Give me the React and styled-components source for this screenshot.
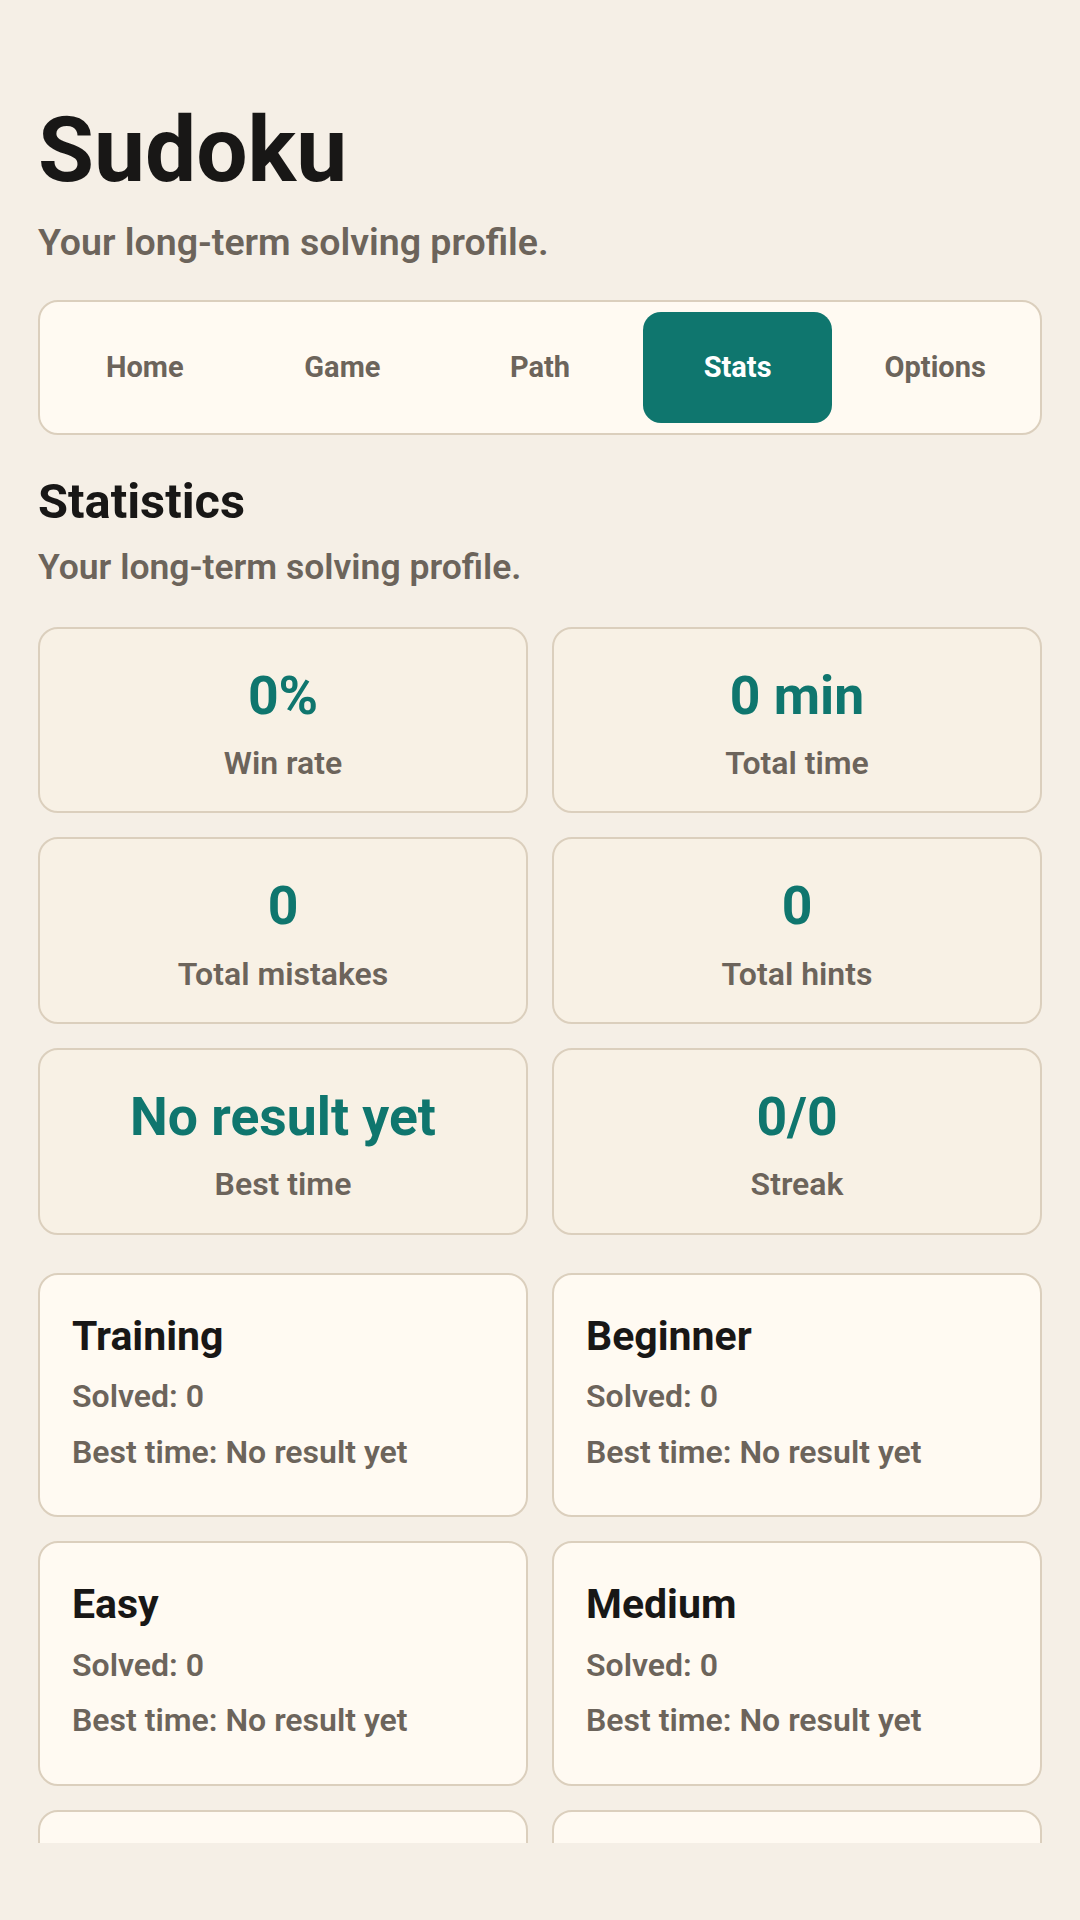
import React from "react";
import styled, { createGlobalStyle } from "styled-components";

const GlobalStyle = createGlobalStyle`
  * {
    box-sizing: border-box;
  }
  body {
    margin: 0;
    background: #f5efe6;
    font-family: Roboto, "Liberation Sans", Arial, sans-serif;
    color: #181716;
  }
`;

const Shell = styled.div`
  height: 100vh;
  display: flex;
  flex-direction: column;
  padding: 100px 38px 77px;
`;

const Title = styled.h1`
  margin: 0;
  font-size: 91px;
  line-height: 1.1;
  font-weight: 700;
  color: #181716;
`;

const Lead = styled.p`
  margin: 16px 0 0;
  font-size: 37.5px;
  line-height: 1.4;
  font-weight: 600;
  color: #6c645b;
`;

const TabBar = styled.nav`
  margin-top: 31px;
  display: grid;
  grid-template-columns: repeat(5, 1fr);
  gap: 8px;
  padding: 10px;
  background: #fffaf2;
  border: 2px solid #dbcfbd;
  border-radius: 20px;
`;

const Tab = styled.button`
  height: 111px;
  border: none;
  border-radius: 18px;
  font-family: inherit;
  font-size: 29px;
  font-weight: 700;
  background: ${(p) => (p.$active ? "#0f766e" : "transparent")};
  color: ${(p) => (p.$active ? "#ffffff" : "#6c645b")};
  cursor: pointer;
`;

const Content = styled.main`
  flex: 1;
  min-height: 0;
  overflow: hidden;
`;

const Heading = styled.h2`
  margin: 38px 0 0;
  font-size: 48.8px;
  line-height: 1.2;
  font-weight: 700;
`;

const SubLead = styled.p`
  margin: 11.5px 0 0;
  font-size: 35.5px;
  line-height: 1.4;
  font-weight: 600;
  color: #6c645b;
`;

const Grid = styled.div`
  display: grid;
  grid-template-columns: 1fr 1fr;
  gap: 24px;
  margin-top: ${(p) => p.$top}px;
`;

const StatCard = styled.div`
  display: flex;
  flex-direction: column;
  align-items: center;
  gap: 16px;
  padding: 35px 20px 29px;
  background: #f8f1e5;
  border: 2px solid #dbcfbd;
  border-radius: 20px;
`;

const StatValue = styled.div`
  font-size: 53.5px;
  line-height: 1.2;
  font-weight: 700;
  color: #0f766e;
`;

const StatLabel = styled.div`
  font-size: 32px;
  line-height: 1.2;
  font-weight: 600;
  color: #6c645b;
`;

const LevelCard = styled.div`
  padding: 37px 32px 41px;
  min-height: 244px;
  background: #fffaf2;
  border: 2px solid #dbcfbd;
  border-radius: 20px;
`;

const LevelName = styled.h3`
  margin: 0 0 13px;
  font-size: 41px;
  line-height: 1.2;
  font-weight: 700;
`;

const LevelLine = styled.p`
  margin: 0;
  font-size: 32px;
  line-height: 1.4;
  font-weight: 600;
  color: #6c645b;

  & + & {
    margin-top: 11px;
  }
`;

const tabs = ["Home", "Game", "Path", "Stats", "Options"];

const stats = [
  { value: "0%", label: "Win rate" },
  { value: "0 min", label: "Total time" },
  { value: "0", label: "Total mistakes" },
  { value: "0", label: "Total hints" },
  { value: "No result yet", label: "Best time" },
  { value: "0/0", label: "Streak" },
];

const levels = ["Training", "Beginner", "Easy", "Medium", "Hard", "Expert"];

export default function App() {
  return (
    <>
      <GlobalStyle />
      <Shell>
        <Title>Sudoku</Title>
        <Lead>Your long-term solving profile.</Lead>
        <TabBar>
          {tabs.map((t) => (
            <Tab key={t} $active={t === "Stats"}>
              {t}
            </Tab>
          ))}
        </TabBar>
        <Content>
          <Heading>Statistics</Heading>
          <SubLead>Your long-term solving profile.</SubLead>
          <Grid $top={34.5}>
            {stats.map((s) => (
              <StatCard key={s.label}>
                <StatValue>{s.value}</StatValue>
                <StatLabel>{s.label}</StatLabel>
              </StatCard>
            ))}
          </Grid>
          <Grid $top={38}>
            {levels.map((l) => (
              <LevelCard key={l}>
                <LevelName>{l}</LevelName>
                <LevelLine>Solved: 0</LevelLine>
                <LevelLine>Best time: No result yet</LevelLine>
              </LevelCard>
            ))}
          </Grid>
        </Content>
      </Shell>
    </>
  );
}
